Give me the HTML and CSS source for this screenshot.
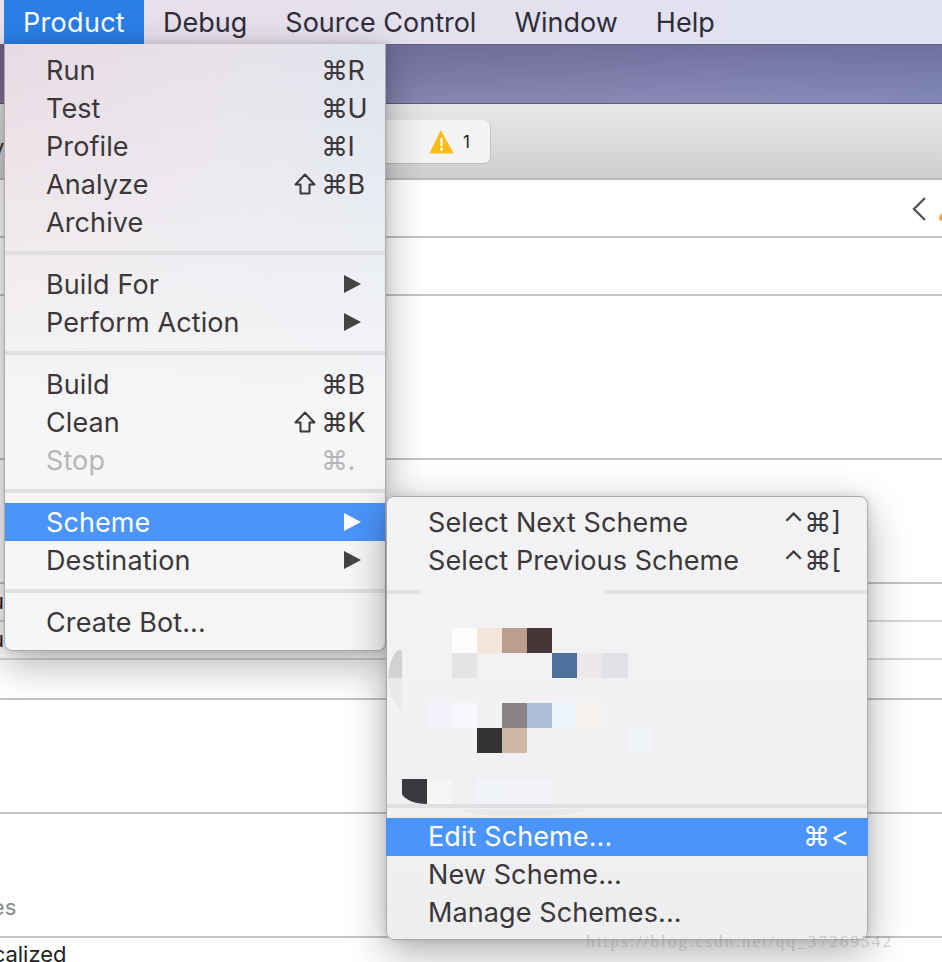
FILE: index.html
```html
<!DOCTYPE html>
<html lang="en">
<head>
<meta charset="utf-8">
<title>Xcode Product menu</title>
<link rel="stylesheet" href="styles.css">
</head>
<body>
<div class="stage">
  <nav class="menubar">
    <span class="bar-item bar-active">Product</span>
    <span class="bar-item">Debug</span>
    <span class="bar-item">Source Control</span>
    <span class="bar-item">Window</span>
    <span class="bar-item">Help</span>
  </nav>
  <div class="titlebar"></div>
  <div class="toolbar">
    <span class="frag-y">y</span>
    <div class="status">
      <svg class="warn" viewBox="0 0 24 24" aria-hidden="true"><path d="M12 1.5 23.6 22.2a1 1 0 0 1-.9 1.4H1.3a1 1 0 0 1-.9-1.4L10.6 1.6c.6-1 2-1 2.6 0Z" fill="#fdbb16"/><path d="M10.7 8h2.6l-.4 8.5h-1.8ZM12 17.6a1.6 1.6 0 1 1 0 3.2 1.6 1.6 0 0 1 0-3.2Z" fill="#fff"/></svg>
      <span class="status-count">1</span>
    </div>
  </div>
  <div class="rows">
    <div class="row row-a">
      <svg class="chev" viewBox="0 0 16 26" aria-hidden="true"><path d="M14 2 3 13l11 11" fill="none" stroke="#555" stroke-width="2.4"/></svg>
      <span class="speck"></span>
    </div>
    <div class="row row-b"></div>
    <div class="row row-c"></div>
    <div class="row row-d"></div>
    <div class="row row-e thin"><span class="frag-u">u</span></div>
    <div class="row row-e thin"><span class="frag-u">u</span></div>
    <div class="row row-f"></div>
    <div class="row row-g"></div>
    <div class="row row-h"><span class="frag-es">files</span></div>
    <div class="row-last"><span class="frag-cal">Localized</span></div>
  </div>

  <div class="menu menu-product">
    <div class="mi"><span>Run</span><span class="sc">⌘R</span></div>
    <div class="mi"><span>Test</span><span class="sc">⌘U</span></div>
    <div class="mi"><span>Profile</span><span class="sc">⌘I</span></div>
    <div class="mi"><span>Analyze</span><span class="sc"><svg class="shift" viewBox="0 0 22 22" aria-hidden="true"><path d="M11 1.5 20.5 11.5H15.5V20.5H6.5V11.5H1.5Z" fill="none" stroke="currentColor" stroke-width="2" stroke-linejoin="round"/></svg>⌘B</span></div>
    <div class="mi"><span>Archive</span></div>
    <div class="sep"></div>
    <div class="mi"><span>Build For</span><i class="tri"></i></div>
    <div class="mi"><span>Perform Action</span><i class="tri"></i></div>
    <div class="sep"></div>
    <div class="mi"><span>Build</span><span class="sc">⌘B</span></div>
    <div class="mi"><span>Clean</span><span class="sc"><svg class="shift" viewBox="0 0 22 22" aria-hidden="true"><path d="M11 1.5 20.5 11.5H15.5V20.5H6.5V11.5H1.5Z" fill="none" stroke="currentColor" stroke-width="2" stroke-linejoin="round"/></svg>⌘K</span></div>
    <div class="mi off"><span>Stop</span><span class="sc">⌘.</span></div>
    <div class="sep"></div>
    <div class="mi hi"><span>Scheme</span><i class="tri"></i></div>
    <div class="mi"><span>Destination</span><i class="tri"></i></div>
    <div class="sep"></div>
    <div class="mi"><span>Create Bot...</span></div>
  </div>

  <div class="menu menu-scheme">
    <div class="mi"><span>Select Next Scheme</span><span class="sc2">⌃⌘]</span></div>
    <div class="mi"><span>Select Previous Scheme</span><span class="sc2">⌃⌘[</span></div>
    <div class="sep"></div>
    <div class="mosaic-space"></div>
    <div class="sep"></div>
    <div class="mi hi"><span>Edit Scheme...</span><span class="sc2 sc-edit">⌘&lt;</span></div>
    <div class="mi"><span>New Scheme...</span></div>
    <div class="mi"><span>Manage Schemes...</span></div>
    <svg class="mosaic" viewBox="386 496 482 444" aria-hidden="true">
      <path d="M424 590h178l5 2-5 3H424l-5-3Z" fill="#f2f2f5"/>
      <path d="M460 809h125c-12 6-25 7-40 7h-50c-15 0-25-2-35-7Z" fill="#e9e9ec"/>
      <path d="M402 650h-4c-6 6-9 14-10 28h14Z" fill="#d2d2d3"/>
      <path d="M388 678h14v34c-8-8-13-20-14-34Z" fill="#e9e9eb"/>
      <rect x="452" y="628" width="25" height="25" fill="#fbfcfd"/>
      <rect x="477" y="628" width="25" height="25" fill="#f4e6da"/>
      <rect x="502" y="628" width="25" height="25" fill="#bb9f8c"/>
      <rect x="527" y="628" width="25" height="25" fill="#473436"/>
      <rect x="452" y="653" width="25" height="25" fill="#e4e4e6"/>
      <rect x="552" y="653" width="25" height="25" fill="#4d709c"/>
      <rect x="577" y="653" width="25" height="25" fill="#ede9ea"/>
      <rect x="602" y="653" width="26" height="25" fill="#e2e2e6"/>
      <rect x="427" y="703" width="25" height="25" fill="#f3f4fb"/>
      <rect x="452" y="703" width="25" height="25" fill="#f8f7fc"/>
      <rect x="502" y="703" width="25" height="25" fill="#8a8488"/>
      <rect x="527" y="703" width="25" height="25" fill="#adbdd6"/>
      <rect x="552" y="703" width="25" height="25" fill="#eef5fb"/>
      <rect x="577" y="703" width="25" height="25" fill="#f8f2ef"/>
      <rect x="477" y="728" width="25" height="25" fill="#333336"/>
      <rect x="502" y="728" width="25" height="25" fill="#cfb8a4"/>
      <rect x="628" y="728" width="25" height="25" fill="#f1f5f9"/>
      <path d="M402 779h25v25c-12 0-22-4-25-10Z" fill="#3a393d"/>
      <rect x="427" y="779" width="25" height="25" fill="#f6f6f6"/>
      <rect x="477" y="779" width="25" height="25" fill="#f1f4f8"/>
      <rect x="502" y="779" width="50" height="25" fill="#f2f3f6"/>
    </svg>
  </div>

  <div class="watermark">https://blog.csdn.net/qq_37269542</div>
</div>
</body>
</html>
```

FILE: styles.css
```css
* { box-sizing: border-box; }
html, body { margin: 0; padding: 0; }
body {
  width: 942px;
  height: 962px;
  overflow: hidden;
  background: #fff;
  font-family: Inter, "DejaVu Sans", sans-serif;
}
.stage {
  position: relative;
  width: 942px;
  height: 962px;
  overflow: hidden;
  display: flex;
  flex-direction: column;
}

/* Menu bar */
.menubar {
  flex: none;
  height: 44px;
  padding-left: 4px;
  display: flex;
  background: linear-gradient(90deg, #e9e0ea 0%, #e4e1ee 50%, #dfe2f2 100%);
  font-size: 27px;
  color: #2f2d3b;
}
.bar-item {
  padding: 0 19px;
  line-height: 46px;
  white-space: nowrap;
}
.bar-active { background: #2a7fe6; color: #fff; letter-spacing: 0.3px; }

/* Window chrome behind the menus */
.titlebar {
  flex: none;
  height: 60px;
  background:
    linear-gradient(180deg, rgba(90, 85, 130, 0.35) 0%, rgba(160, 160, 205, 0.3) 100%),
    linear-gradient(100deg, #7d5f83 0%, #7a7aa6 45%, #8080ae 75%, #7680ae 100%);
  border-top: 1px solid #645f80;
  border-bottom: 1px solid #5d5a7e;
}
.toolbar {
  flex: none;
  height: 76px;
  position: relative;
  display: flex;
  align-items: flex-start;
  padding-top: 16px;
  padding-left: 386px;
  background: linear-gradient(180deg, #e8e6e8 0%, #d0ced0 100%);
  border-bottom: 2px solid #b9b8b9;
}
.frag-y {
  position: absolute;
  left: -8px;
  top: 30px;
  font-size: 22px;
  color: #333;
}
.status {
  width: 105px;
  height: 44px;
  display: flex;
  align-items: center;
  padding-left: 43px;
  gap: 9px;
  background: #f5f4f5;
  border-radius: 0 7px 7px 0;
  border-right: 1px solid #c6c5c6;
  border-bottom: 1px solid #bdbcbd;
}
.warn { width: 25px; height: 24px; }
.status-count { font-size: 17px; color: #222; }

/* Content rows */
.rows { flex: 1; display: flex; flex-direction: column; }
.row {
  flex: none;
  position: relative;
  border-bottom: 2px solid #c3c3c3;
  overflow: hidden;
}
.row.thin { border-bottom-color: #d8d8d8; }
.row-a { height: 58px; }
.row-b { height: 58px; }
.row-c { height: 164px; }
.row-d { height: 124px; }
.row-e { height: 38px; }
.row-f { height: 40px; }
.row-g { height: 114px; }
.row-h { height: 124px; }
.row-last { flex: 1; overflow: hidden; }
.chev { position: absolute; left: 911px; top: 16px; width: 16px; height: 26px; }
.speck {
  position: absolute;
  left: 939px;
  top: 34px;
  width: 6px;
  height: 7px;
  border-radius: 3px;
  background: #f0ab3c;
}
.frag-u {
  display: block;
  margin: 4px 0 0 -9px;
  font-size: 22px;
  line-height: 26px;
  color: #222;
}
.frag-es {
  display: block;
  margin: 79px 0 0 -27px;
  font-size: 22px;
  line-height: 28px;
  color: #8a8a8a;
}
.frag-cal {
  display: block;
  margin: 2px 0 0 -33px;
  font-size: 22px;
  line-height: 28px;
  color: #222;
}

/* Menus */
.menu {
  position: absolute;
  display: flex;
  flex-direction: column;
  border: 1px solid #aaa9ad;
  font-size: 27px;
  color: #3b373b;
  box-shadow: 0 12px 40px rgba(0, 0, 0, 0.32), 0 0 8px rgba(0, 0, 0, 0.12);
}
.menu-product {
  left: 4px;
  top: 44px;
  width: 382px;
  height: 607px;
  padding: 7px 0 0;
  border-top: 0;
  border-radius: 0 0 8px 8px;
  background:
    linear-gradient(180deg, rgba(246, 246, 247, 0) 0%, rgba(246, 246, 247, 0.55) 32%, #f6f6f7 62%),
    linear-gradient(100deg, #e9dae2 0%, #e6e2ea 50%, #d8e4f1 100%);
}
.menu-scheme {
  left: 386px;
  top: 496px;
  width: 482px;
  height: 444px;
  padding: 7px 0 0;
  border-radius: 8px;
  background: linear-gradient(180deg, #f3f3f6 0%, #f1f1f4 60%, #eeeef0 100%);
}
.mi {
  flex: none;
  height: 38px;
  padding: 0 18px 0 41px;
  display: flex;
  justify-content: space-between;
  align-items: center;
  letter-spacing: 0.1px;
  white-space: nowrap;
}
.menu-scheme .mi { padding: 0 26px 2px 41px; }
.menu-scheme .hi { padding-left: 42px; padding-right: 27px; }
/* Shortcut column: the command glyph always starts at the same x */
.sc {
  flex: none;
  width: 46px;
  position: relative;
  display: flex;
  align-items: center;
  font-family: Inter, "DejaVu Sans", sans-serif;
  letter-spacing: -0.6px;
}
.sc2 { letter-spacing: 0; }
.sc-edit { margin-right: -9px; letter-spacing: 1px; }
.shift { flex: none; width: 22px; height: 22px; margin: 0 5px 0 -27px; }
.off { color: #b6b6b8; }
.hi { background: #4a94fb; color: #fff; margin: 0 -1px; }
.menu-product .hi { margin: 0; }
.sep { flex: none; height: 24px; position: relative; }
.sep::after {
  content: "";
  position: absolute;
  left: 0;
  right: 0;
  top: 10px;
  height: 4px;
  background: #e0dfe2;
}
.mosaic-space { flex: none; height: 190px; }
.mosaic { position: absolute; left: -1px; top: -1px; width: 482px; height: 444px; }
.tri {
  width: 0;
  height: 0;
  border-style: solid;
  border-width: 9.5px 0 9.5px 17px;
  border-color: transparent transparent transparent #444;
  margin-right: 6px;
}
.hi .tri { border-left-color: #fff; }

.watermark {
  position: absolute;
  left: 586px;
  top: 932px;
  font-family: "Liberation Serif", serif;
  font-size: 17px;
  letter-spacing: 2.15px;
  color: rgba(140, 140, 140, 0.42);
  white-space: nowrap;
}
```
